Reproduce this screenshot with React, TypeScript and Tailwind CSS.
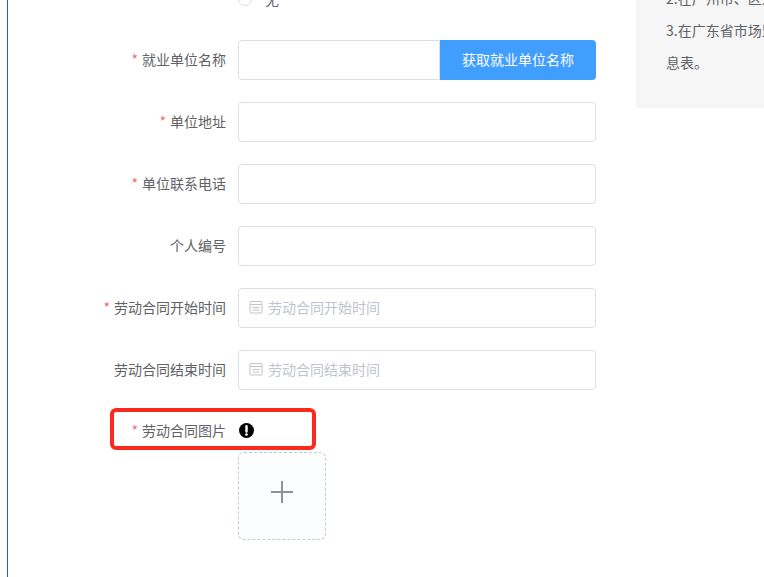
import React from "react";

const font = "font-['Microsoft_YaHei','Noto_Sans_CJK_SC',sans-serif]";

function Label({ text, required }: { text: string; required?: boolean }) {
    return (
        <label className="w-[238px] shrink-0 pb-[2px] pr-3 text-right text-sm text-[#606266]">
            {required && <span className="mr-1 text-[#f56c6c]">*</span>}
            {text}
        </label>
    );
}

function CalendarIcon() {
    return (
        <svg width="14" height="14" viewBox="0 0 14 14" fill="none" stroke="#c0c4cc" strokeWidth="1" className="shrink-0">
            <rect x="1" y="1.5" width="12" height="11.5" rx="0.5" />
            <path d="M1 4.5h12M3.5 7.5h7M3.5 10h7" />
        </svg>
    );
}

function TextRow({ label, required }: { label: string; required?: boolean }) {
    return (
        <div className="flex items-center">
            <Label text={label} required={required} />
            <input className="h-10 w-[358px] rounded border border-[#dcdfe6] bg-white" />
        </div>
    );
}

function DateRow({ label, required }: { label: string; required?: boolean }) {
    return (
        <div className="flex items-center">
            <Label text={label} required={required} />
            <div className="flex h-10 w-[358px] items-center gap-[5px] rounded border border-[#dcdfe6] bg-white pb-[2px] pl-[10px] text-sm text-[#c0c4cc]">
                <CalendarIcon />
                {label}
            </div>
        </div>
    );
}

export default function App() {
    return (
        <div className={`${font} relative h-[577px] w-[764px] overflow-hidden bg-white`}>
            <div className="flex h-full">
                <div className="ml-[7px] w-[629px] shrink-0 border-l border-[#1f6f94]">
                    <div className="-ml-[8px] flex h-[40px] items-start">
                        <div className="ml-[238px] -mt-[11px] flex items-center gap-[13px] text-sm text-[#606266]">
                            <span className="size-[14px] rounded-full border border-[#dcdfe6]" />
                            无
                        </div>
                    </div>
                    <div className="-ml-[8px] flex flex-col gap-[22px]">
                        <div className="flex items-center">
                            <Label text="就业单位名称" required />
                            <input className="h-10 w-[202px] rounded-l border border-[#dcdfe6] bg-white" />
                            <button className="h-10 w-[156px] rounded-r bg-[#409eff] pb-[2px] text-sm text-white">获取就业单位名称</button>
                        </div>
                        <TextRow label="单位地址" required />
                        <TextRow label="单位联系电话" required />
                        <TextRow label="个人编号" />
                        <DateRow label="劳动合同开始时间" required />
                        <DateRow label="劳动合同结束时间" />
                    </div>
                    <div className="-ml-[8px] mt-[30px] flex items-center">
                        <Label text="劳动合同图片" required />
                        <svg width="15" height="15" viewBox="0 0 16 16" className="ml-[1px] -mt-[1px]">
                            <circle cx="8" cy="8" r="8" fill="#000" />
                            <path d="M8 3.5v5.5" stroke="#fff" strokeWidth="2.6" strokeLinecap="round" />
                            <circle cx="8" cy="12.2" r="1.4" fill="#fff" />
                        </svg>
                    </div>
                    <div className="ml-[230px] mt-[10px] flex size-[88px] items-center justify-center rounded-md border border-dashed border-[#c0ccda] bg-[#fbfdff] pb-[9px]">
                        <svg width="24" height="24" viewBox="0 0 24 24" stroke="#8c939d" strokeWidth="2">
                            <path d="M12 1v22M1 12h22" />
                        </svg>
                    </div>
                </div>
                <div className="h-[108px] flex-1 overflow-hidden bg-[#f6f6f6] pl-[30px] text-sm leading-8 text-[#606266]">
                    <p className="-mt-[18px] whitespace-nowrap">2.在广州市、区人力资源部门</p>
                    <p className="whitespace-nowrap">3.在广东省市场监督管理局</p>
                    <p>息表。</p>
                </div>
            </div>
            {/* red annotation box */}
            <div className="absolute left-[110px] top-[408px] h-[42px] w-[206px] rounded-md border-[4px] border-[#fb2a1c]" />
        </div>
    );
}
